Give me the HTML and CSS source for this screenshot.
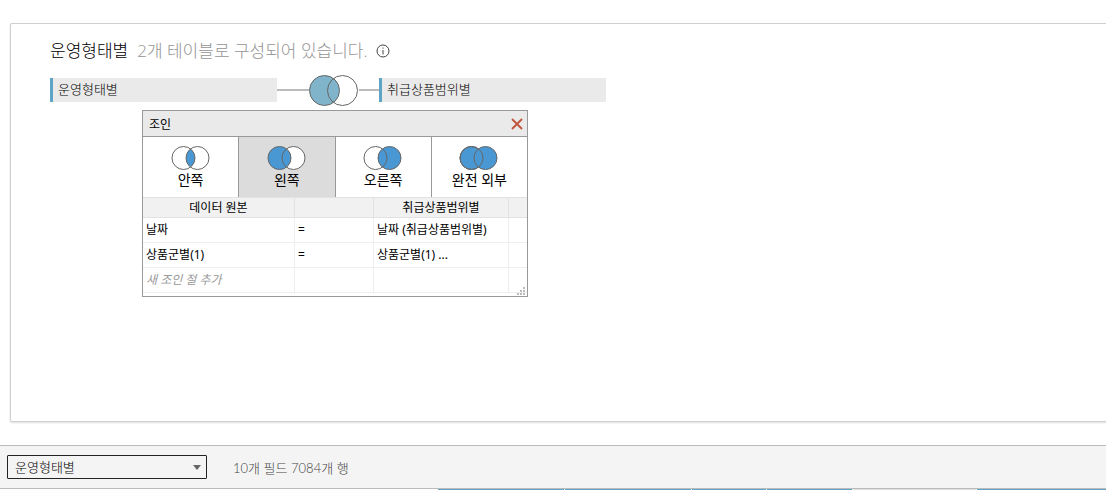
FILE: index.html
```
<!DOCTYPE html>
<html lang="ko">

<head>
    <meta charset="UTF-8">
    <meta name="viewport" content="width=device-width, initial-scale=1.0">
    <title>운영형태별</title>
    <link rel="stylesheet" href="styles.css">
</head>

<body>
    <main class="canvas">
        <div class="heading">
            <h1>운영형태별</h1>
            <p>2개 테이블로 구성되어 있습니다.</p>
            <svg class="info" viewBox="0 0 14 14">
                <circle cx="7" cy="7" r="6" />
                <path d="M7 6v4.5M7 3.5v1.2" />
            </svg>
        </div>
        <div class="tables">
            <div class="node">운영형태별</div>
            <span class="line"></span>
            <svg class="join_icon" viewBox="0 0 50 32">
                <circle class="fill" cx="15.5" cy="16.5" r="15" />
                <circle cx="33.5" cy="16.5" r="15" />
            </svg>
            <span class="line short"></span>
            <div class="node">취급상품범위별</div>

            <!-- 조인 대화상자 -->
            <section class="dialog">
                <header>
                    <h2>조인</h2>
                    <button class="close" aria-label="닫기">
                        <svg viewBox="0 0 12 12"><path d="M1 1l10 10M11 1L1 11" /></svg>
                    </button>
                </header>
                <div class="types">
                    <button>
                        <svg class="venn" viewBox="0 0 40 26">
                            <path class="fill" d="M19.5 3.9a11.5 11.5 0 0 1 0 18.2a11.5 11.5 0 0 1 0-18.2z" />
                            <circle cx="12.5" cy="13" r="11.5" />
                            <circle cx="26.5" cy="13" r="11.5" />
                        </svg>
                        안쪽
                    </button>
                    <button class="active">
                        <svg class="venn" viewBox="0 0 40 26">
                            <circle class="white" cx="26.5" cy="13" r="11.5" />
                            <circle class="fill" cx="12.5" cy="13" r="11.5" />
                            <circle cx="26.5" cy="13" r="11.5" />
                        </svg>
                        왼쪽
                    </button>
                    <button>
                        <svg class="venn" viewBox="0 0 40 26">
                            <circle class="fill" cx="26.5" cy="13" r="11.5" />
                            <circle cx="12.5" cy="13" r="11.5" />
                        </svg>
                        오른쪽
                    </button>
                    <button>
                        <svg class="venn" viewBox="0 0 40 26">
                            <circle class="fill" cx="12.5" cy="13" r="11.5" />
                            <circle class="fill" cx="26.5" cy="13" r="11.5" />
                            <circle cx="12.5" cy="13" r="11.5" />
                        </svg>
                        완전 외부
                    </button>
                </div>
                <table>
                    <colgroup>
                        <col class="source">
                        <col class="operator">
                        <col class="target">
                        <col>
                    </colgroup>
                    <thead>
                        <tr>
                            <th>데이터 원본</th>
                            <th></th>
                            <th>취급상품범위별</th>
                            <th></th>
                        </tr>
                    </thead>
                    <tbody>
                        <tr>
                            <td>날짜</td>
                            <td>=</td>
                            <td>날짜 (취급상품범위별)</td>
                            <td></td>
                        </tr>
                        <tr>
                            <td>상품군별(1)</td>
                            <td>=</td>
                            <td>상품군별(1) ...</td>
                            <td></td>
                        </tr>
                        <tr>
                            <td class="add">새 조인 절 추가</td>
                            <td></td>
                            <td></td>
                            <td></td>
                        </tr>
                    </tbody>
                </table>
                <svg class="grip" viewBox="0 0 8 8">
                    <path d="M6 0h2v2H6zM3 3h2v2H3zM6 3h2v2H6zM0 6h2v2H0zM3 6h2v2H3zM6 6h2v2H6z" />
                </svg>
            </section>
        </div>
    </main>

    <div class="toolbar">
        <div class="select">
            <select aria-label="테이블">
                <option>운영형태별</option>
            </select>
            <svg viewBox="0 0 8 5"><path d="M0 0h8L4 5z" /></svg>
        </div>
        <p>10개 필드 7084개 행</p>
    </div>

    <!-- 필드 머리글 -->
    <div class="fields">
        <span></span>
        <span></span>
        <span class="narrow"></span>
        <span class="medium"></span>
        <span class="empty"></span>
        <span class="last"></span>
    </div>
</body>

</html>
```
FILE: styles.css
```
* {
    margin: 0;
    padding: 0;
    box-sizing: border-box;
}

body {
    display: flex;
    flex-direction: column;
    height: 100vh;
    overflow: hidden;
    background: #fff;
    color: #000;
    font-family: "Open Sans", "Noto Sans CJK KR", sans-serif;
    font-size: 13px;
    font-weight: 300;
}

button,
select {
    border: 0;
    background: none;
    color: inherit;
    font: inherit;
}

svg {
    display: block;
    flex: none;
    fill: none;
}

.canvas {
    flex: 1;
    margin: 23px 0 23px 10px;
    padding: 15px 39px;
    border: 1px solid #d0d0d0;
    border-right: 0;
    border-radius: 2px 0 0 2px;
    box-shadow: 0 1px 2px #ddd;
}

.heading {
    display: flex;
    align-items: center;
    height: 24px;
    font-size: 17px;
    line-height: 24px;
    white-space: nowrap;
}

.heading h1 {
    margin-right: 9px;
    font-size: 17px;
    font-weight: 300;
}

.heading p {
    margin-right: 8px;
    color: #949494;
}

.info {
    width: 14px;
    height: 14px;
    stroke: #444;
}

.tables {
    position: relative;
    display: flex;
    align-items: center;
    margin-top: 11px;
}

.node {
    width: 227px;
    height: 24px;
    padding-left: 5px;
    border-left: 3px solid #5fa3c6;
    background: #eaeaea;
    line-height: 22px;
}

.line {
    width: 32px;
    height: 2px;
    background: #bbb;
}

.short {
    width: 20px;
}

.join_icon {
    width: 50px;
    height: 32px;
    stroke: #666;
}

.join_icon .fill {
    fill: #7fb4ca;
}

.dialog {
    position: absolute;
    top: 36px;
    left: 92px;
    width: 386px;
    padding-bottom: 3px;
    border: 1px solid #999;
    background: #fff;
    color: #000;
    font-family: "Noto Sans", "Noto Sans CJK KR", sans-serif;
    font-weight: 400;
}

.dialog header {
    display: flex;
    align-items: center;
    justify-content: space-between;
    height: 26px;
    padding: 0 4px 0 6px;
    border-bottom: 1px solid #999;
    background: #eaeaea;
}

.dialog h2 {
    font-size: 12px;
    font-weight: 400;
}

.close svg {
    width: 12px;
    height: 12px;
    stroke: #c0573f;
    stroke-width: 2;
}

.types {
    display: flex;
    height: 60px;
}

.types button {
    display: flex;
    flex: 1;
    flex-direction: column;
    align-items: center;
    padding-top: 8px;
    border-right: 1px solid #999;
    font-size: 14px;
    line-height: 18px;
}

.types button:last-child {
    border-right: 0;
}

.types .active {
    background: #dcdcdc;
}

.venn {
    width: 40px;
    height: 26px;
    stroke: #666;
}

.venn .fill {
    fill: #4a98d3;
}

.venn path {
    stroke: none;
}

.venn .white {
    fill: #fff;
    stroke: none;
}

table {
    width: 100%;
    border-collapse: separate;
    border-spacing: 0;
    table-layout: fixed;
    font-size: 12px;
}

.source {
    width: 152px;
}

.operator {
    width: 79px;
}

.target {
    width: 135px;
}

th,
td {
    height: 25px;
    padding: 0 3px;
    border-right: 1px solid #eee;
    border-bottom: 1px solid #eee;
    line-height: 20px;
    text-align: left;
    white-space: nowrap;
}

th {
    height: 21px;
    border-top: 1px solid #e2e2e2;
    border-color: #e2e2e2;
    background: #f1f1f1;
    font-weight: 400;
    line-height: 19px;
    text-align: center;
}

th:last-child,
td:last-child {
    border-right: 0;
}

.add {
    color: #999;
    font-style: italic;
}

.grip {
    position: absolute;
    right: 2px;
    bottom: 1px;
    width: 8px;
    height: 8px;
    fill: #bbb;
}

.toolbar {
    display: flex;
    align-items: center;
    gap: 26px;
    height: 44px;
    padding-left: 7px;
    border-top: 1px solid #bbb;
    border-bottom: 1px solid #bbb;
    background: #f4f4f4;
}

.toolbar p {
    color: #444;
    font-family: Lato, "Noto Sans CJK KR", sans-serif;
}

.select {
    position: relative;
}

.select select {
    display: block;
    width: 200px;
    height: 24px;
    padding: 0 24px 0 7px;
    border: 1px solid #222;
    border-radius: 1px;
    appearance: none;
}

.select svg {
    position: absolute;
    top: 10px;
    right: 6px;
    width: 8px;
    height: 5px;
    fill: #666;
    pointer-events: none;
}

.fields {
    display: flex;
    gap: 1px;
    height: 1px;
    padding-left: 438px;
}

.fields span {
    width: 126px;
    background: #5fa3c6;
}

.fields .narrow {
    width: 74px;
}

.fields .medium {
    width: 85px;
}

.fields .empty {
    width: 123px;
    background: #ddd;
}

.fields .last {
    flex: 1;
}
```
